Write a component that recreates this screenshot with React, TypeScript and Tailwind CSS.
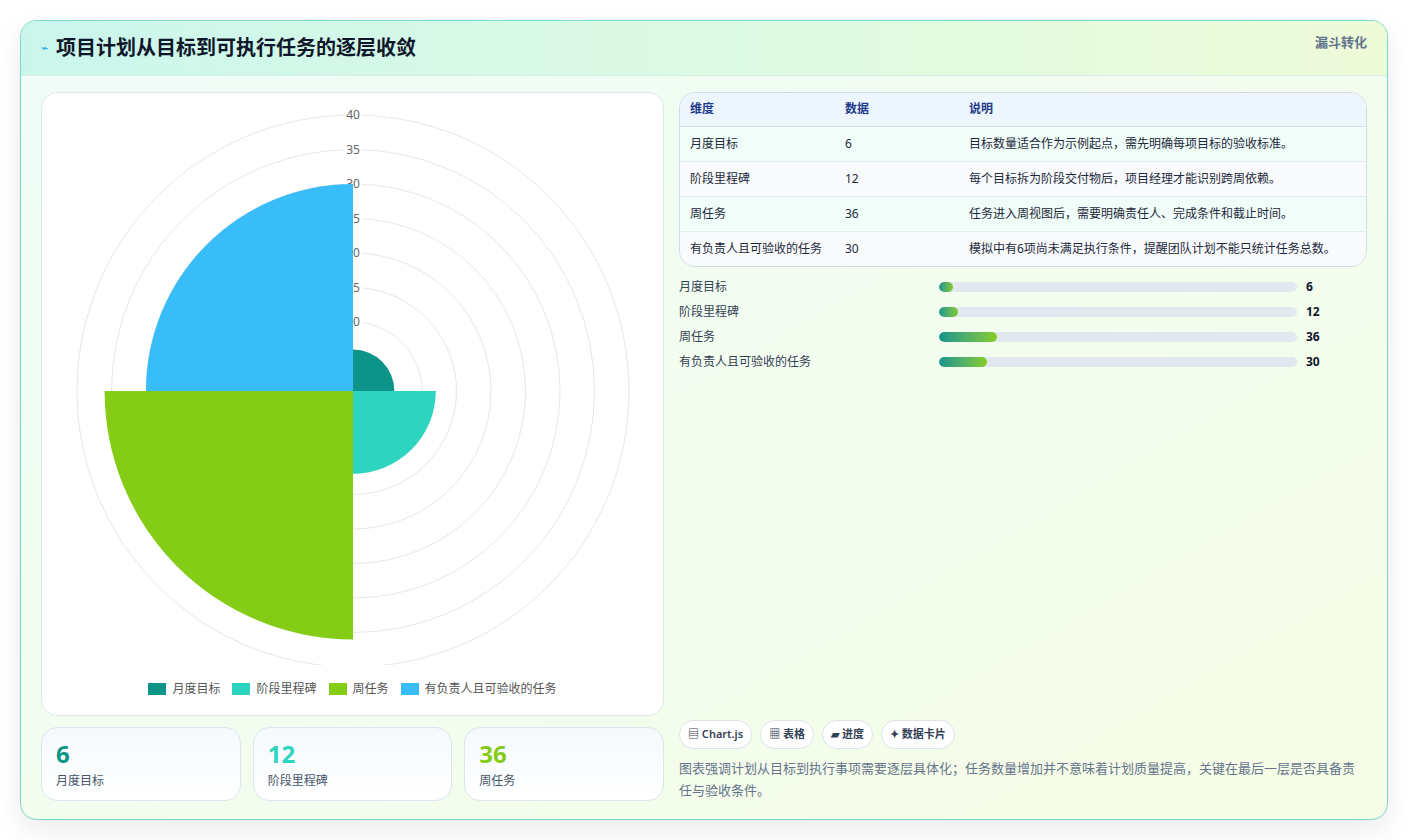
import React from "react";

const F = { fontFamily: '"Noto Sans", "Noto Sans CJK SC", sans-serif' };
const rows = [
  ["月度目标", "6", "目标数量适合作为示例起点，需先明确每项目标的验收标准。"],
  ["阶段里程碑", "12", "每个目标拆为阶段交付物后，项目经理才能识别跨周依赖。"],
  ["周任务", "36", "任务进入周视图后，需要明确责任人、完成条件和截止时间。"],
  ["有负责人且可验收的任务", "30", "模拟中有6项尚未满足执行条件，提醒团队计划不能只统计任务总数。"],
];
const bars: [string, number, number][] = [
  ["月度目标", 6, 3.8],
  ["阶段里程碑", 12, 5.3],
  ["周任务", 36, 16.2],
  ["有负责人且可验收的任务", 30, 13.4],
];

function wedge(cx: number, cy: number, r: number, a0: number, a1: number) {
  const p = (a: number) => [cx + r * Math.sin(a), cy - r * Math.cos(a)];
  const [x0, y0] = p(a0);
  const [x1, y1] = p(a1);
  return `M${cx} ${cy} L${x0} ${y0} A${r} ${r} 0 0 1 ${x1} ${y1} Z`;
}

function Chart() {
  const cx = 311, cy = 296, k = 6.9;
  const segs: [number, string][] = [[6, "#0d9488"], [12, "#2dd4bf"], [36, "#84cc16"], [30, "#38bdf8"]];
  return (
    <svg width="621" height="570" className="block">
      {[1, 2, 3, 4, 5, 6, 7, 8].map((i) => (
        <circle key={i} cx={cx} cy={cy} r={i * 5 * k} fill="none" stroke="#e5e7eb" strokeWidth="1" />
      ))}
      {[10, 15, 20, 25, 30, 35, 40].map((v) => (
        <g key={v}>
          <rect x={cx - 9} y={cy - v * k - 7} width="18" height="13" fill="white" />
          <text x={cx} y={cy - v * k + 4} textAnchor="middle" fontSize="12" fill="#666" style={F}>{v}</text>
        </g>
      ))}
      {segs.map(([v, c], i) => (
        <path key={i} d={wedge(cx, cy, v * k, (i * Math.PI) / 2, ((i + 1) * Math.PI) / 2)} fill={c} />
      ))}
    </svg>
  );
}

export default function App() {
  return (
    <div className="w-[1408px] h-[840px] bg-white p-5" style={F}>
      <div className="h-[800px] rounded-2xl border border-[#7dd8c8] overflow-hidden flex flex-col shadow-[0_10px_30px_rgba(0,0,0,0.08)] bg-gradient-to-br from-[#effcf8] to-[#f6fde6]">
        <div className="h-[55px] flex items-center justify-between px-5 border-b border-[#d6efe6] bg-gradient-to-r from-[#cbf6ec] via-[#dcfae4] to-[#eefbd8]">
          <div className="flex items-center gap-2">
            <span className="text-[#0ea5e9] text-xs">⌁</span>
            <span className="text-[20px] font-bold text-[#0f172a]">项目计划从目标到可执行任务的逐层收敛</span>
          </div>
          <span className="text-[13px] font-bold text-[#64748b] self-start mt-3">漏斗转化</span>
        </div>
        <div className="flex gap-[15px] px-5 pt-[16px] flex-1">
          <div className="w-[623px] flex flex-col gap-[11px]">
            <div className="h-[624px] bg-white rounded-2xl border border-[#dbe7ef] flex flex-col items-center pt-[2px]">
              <Chart />
              <div className="flex items-center gap-3 text-[12px] text-[#555] mt-[15px]">
                {[["#0d9488", "月度目标"], ["#2dd4bf", "阶段里程碑"], ["#84cc16", "周任务"], ["#38bdf8", "有负责人且可验收的任务"]].map(([c, t]) => (
                  <span key={t} className="flex items-center gap-[6px]"><span className="w-[18px] h-[12px]" style={{ background: c }} />{t}</span>
                ))}
              </div>
            </div>
            <div className="grid grid-cols-3 gap-3">
              {[["6", "月度目标", "text-[#0d9488]"], ["12", "阶段里程碑", "text-[#2dd4bf]"], ["36", "周任务", "text-[#84cc16]"]].map(([n, t, c]) => (
                <div key={t} className="h-[74px] rounded-2xl border border-[#dbe7ef] bg-gradient-to-b from-[#f5f9fd] to-white px-[14px] pt-[10px]">
                  <div className={`text-[24px] font-bold leading-8 ${c}`}>{n}</div>
                  <div className="text-[12px] text-[#475569] mt-[2px]">{t}</div>
                </div>
              ))}
            </div>
          </div>
          <div className="flex-1 flex flex-col">
            <div className="rounded-2xl border border-[#cfdde8] overflow-hidden bg-white">
              <table className="w-full text-[12px] text-[#1e293b]">
                <thead>
                  <tr className="bg-[#eef6fd] text-[#1e3a8a] h-[33px] text-left border-b border-[#d5e1ea]">
                    <th className="font-semibold pl-[10px] w-[165px]">维度</th>
                    <th className="font-semibold w-[124px]">数据</th>
                    <th className="font-semibold">说明</th>
                  </tr>
                </thead>
                <tbody>
                  {rows.map((r, i) => (
                    <tr key={i} className={`h-[35px] border-b border-[#e4ecf2] last:border-b-0 ${i % 2 ? "bg-[#f8fafc]" : "bg-[#f0fdf8]"}`}>
                      <td className="pl-[10px]">{r[0]}</td>
                      <td>{r[1]}</td>
                      <td>{r[2]}</td>
                    </tr>
                  ))}
                </tbody>
              </table>
            </div>
            <div className="flex flex-col gap-[9px] mt-[12px]">
              {bars.map(([t, v, p]) => (
                <div key={t} className="flex items-center h-[16px] text-[12px] text-[#334155]">
                  <span className="w-[260px]">{t}</span>
                  <div className="w-[358px] h-[10px] rounded-full bg-[#e2e8f0] overflow-hidden">
                    <div className="h-full rounded-full bg-gradient-to-r from-[#0d9488] to-[#84cc16]" style={{ width: `${p}%` }} />
                  </div>
                  <span className="ml-[9px] font-bold text-[#0f172a]">{v}</span>
                </div>
              ))}
            </div>
            <div className="flex-1" />
            <div className="flex gap-2 text-[11px] font-semibold text-[#334155]">
              {["▤ Chart.js", "▦ 表格", "▰ 进度", "✦ 数据卡片"].map((t) => (
                <span key={t} className="px-[8px] h-[29px] flex items-center rounded-full border border-[#dbe3ea] bg-white">{t}</span>
              ))}
            </div>
            <p className="text-[13px] text-[#64748b] leading-[22px] mt-[8px] mb-[18px]">
              图表强调计划从目标到执行事项需要逐层具体化；任务数量增加并不意味着计划质量提高，关键在最后一层是否具备责任与验收条件。
            </p>
          </div>
        </div>
      </div>
    </div>
  );
}
